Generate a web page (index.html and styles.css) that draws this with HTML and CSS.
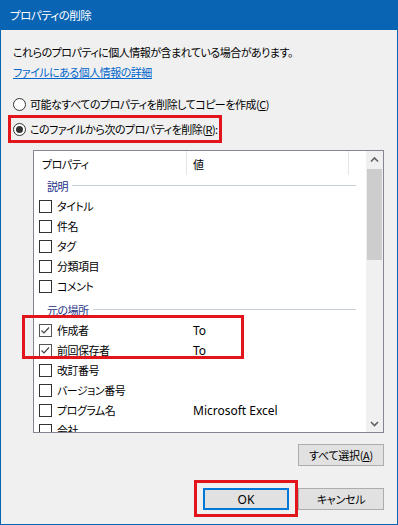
FILE: index.html
```html
<!DOCTYPE html>
<html lang="ja">
<head>
  <meta charset="UTF-8">
  <title>プロパティの削除</title>
  <link rel="stylesheet" href="styles.css">
</head>
<body>
  <div class="window">
    <div class="titlebar">プロパティの削除</div>
    <div class="content">
      <p class="note">これらのプロパティに個人情報が含まれている場合があります。</p>
      <a class="link" href="#">ファイルにある個人情報の詳細</a>

      <div class="radio-row"><span class="radio"></span><span class="label">可能なすべてのプロパティを削除してコピーを作成(<u>C</u>)</span></div>
      <div class="radio-row marked"><span class="radio on"></span><span class="label">このファイルから次のプロパティを削除(<u>R</u>):</span></div>

      <div class="listbox">
        <div class="list-main">
          <div class="list-head">
            <span class="head-name">プロパティ</span>
            <span class="head-val">値</span>
          </div>
          <div class="group"><span>説明</span></div>
          <div class="item"><span class="cell-name"><span class="check"></span>タイトル</span></div>
          <div class="item"><span class="cell-name"><span class="check"></span>件名</span></div>
          <div class="item"><span class="cell-name"><span class="check"></span>タグ</span></div>
          <div class="item"><span class="cell-name"><span class="check"></span>分類項目</span></div>
          <div class="item"><span class="cell-name"><span class="check"></span>コメント</span></div>
          <div class="group second"><span>元の場所</span></div>
          <div class="item"><span class="cell-name"><span class="check on"><svg width="13" height="13" viewBox="0 0 13 13"><polyline points="2.5,6.5 5,9 10,3.5" fill="none" stroke="#444" stroke-width="1.2"/></svg></span>作成者</span><span class="cell-val">To</span></div>
          <div class="item"><span class="cell-name"><span class="check on"><svg width="13" height="13" viewBox="0 0 13 13"><polyline points="2.5,6.5 5,9 10,3.5" fill="none" stroke="#444" stroke-width="1.2"/></svg></span>前回保存者</span><span class="cell-val">To</span></div>
          <div class="item"><span class="cell-name"><span class="check"></span>改訂番号</span></div>
          <div class="item"><span class="cell-name"><span class="check"></span>バージョン番号</span></div>
          <div class="item"><span class="cell-name"><span class="check"></span>プログラム名</span><span class="cell-val">Microsoft Excel</span></div>
          <div class="item"><span class="cell-name"><span class="check"></span>会社</span></div>
        </div>
        <div class="scrollbar">
          <span class="arrow"><svg width="17" height="17" viewBox="0 0 17 17"><polyline points="5,10.5 8.5,7 12,10.5" fill="none" stroke="#606060" stroke-width="1.6"/></svg></span>
          <span class="thumb"></span>
          <span class="track"></span>
          <span class="arrow"><svg width="17" height="17" viewBox="0 0 17 17"><polyline points="5,7 8.5,10.5 12,7" fill="none" stroke="#606060" stroke-width="1.6"/></svg></span>
        </div>
      </div>

      <div class="select-row"><button class="btn">すべて選択(<u>A</u>)</button></div>
      <div class="footer">
        <button class="btn default latin">OK</button>
        <button class="btn">キャンセル</button>
      </div>
    </div>

    <div class="mark mark-rows"></div>
    <div class="mark mark-ok"></div>
  </div>
</body>
</html>
```

FILE: styles.css
```css
body {
  margin: 0;
  background-color: #f0f0f0;
  font-family: "Noto Sans CJK JP", "Noto Sans", sans-serif;
  font-size: 11px;
  letter-spacing: -0.5px;
  font-feature-settings: "palt";
  color: #000;
}
.window {
  position: relative;
  width: 398px;
  height: 525px;
  box-sizing: border-box;
  border: 1px solid #0a64b4;
  border-top: none;
  background-color: #f0f0f0;
  overflow: hidden;
}
.titlebar {
  height: 30px;
  line-height: 30px;
  margin: 0 -1px;
  padding-left: 10px;
  background-color: #0a64b4;
  color: #fff;
  font-size: 11.5px;
}
.content {
  padding: 0 13px 0 12px;
}
.note {
  margin: 12px 0 0;
  line-height: 20px;
}
.link {
  display: block;
  line-height: 20px;
  color: #0066cc;
}
.radio-row {
  display: flex;
  align-items: center;
  height: 20px;
  margin-top: 12px;
  white-space: nowrap;
}
.radio {
  flex: none;
  width: 13px;
  height: 13px;
  box-sizing: border-box;
  border: 1px solid #333;
  border-radius: 50%;
  background-color: #fff;
  margin-right: 4px;
  display: flex;
  align-items: center;
  justify-content: center;
}
.radio.on::after {
  content: "";
  width: 7px;
  height: 7px;
  border-radius: 50%;
  background-color: #333;
}
.radio-row.marked {
  width: 214px;
  height: 28px;
  box-sizing: border-box;
  margin: 1px 0 0 -5px;
  padding-left: 2px;
  border: 3px solid #e2141c;
}
.listbox {
  display: flex;
  width: 351px;
  height: 283px;
  box-sizing: border-box;
  margin: 7px 0 0 20px;
  border: 1px solid #828790;
  background-color: #fff;
  overflow: hidden;
}
.list-main {
  flex: 1;
  overflow: hidden;
}
.list-head {
  display: flex;
  height: 24px;
  line-height: 26px;
}
.list-head span {
  height: 24px;
  box-sizing: border-box;
  border-right: 1px solid #e5e5e5;
}
.head-name {
  width: 153px;
  padding-left: 8px;
}
.head-val {
  width: 162px;
  padding-left: 6px;
}
.group {
  display: flex;
  align-items: center;
  height: 21px;
  padding: 0 10px 0 13px;
  color: #1e3287;
}
.group.second {
  margin-top: 3px;
}
.group::after {
  content: "";
  flex: 1;
  height: 1px;
  margin-left: 4px;
  background-color: #c8d0da;
}
.item {
  display: flex;
  align-items: center;
  height: 20px;
}
.cell-name {
  display: flex;
  align-items: center;
  width: 159px;
  padding-left: 5px;
  box-sizing: border-box;
}
.cell-val,
.latin {
  font-family: "Noto Sans", "Open Sans", sans-serif;
  font-size: 12px;
  letter-spacing: 0;
}
.check {
  width: 13px;
  height: 13px;
  box-sizing: border-box;
  border: 1px solid #333;
  margin-right: 5px;
  position: relative;
}
.check.on {
  border-color: #555;
}
.check svg {
  position: absolute;
  left: -1px;
  top: -1px;
}
.scrollbar {
  width: 17px;
  display: flex;
  flex-direction: column;
  background-color: #f0f0f0;
}
.arrow {
  height: 17px;
  display: block;
}
.arrow svg {
  display: block;
}
.thumb {
  height: 91px;
  margin: 1px 1px 0;
  background-color: #cdcdcd;
}
.track {
  flex: 1;
}
.select-row {
  display: flex;
  justify-content: flex-end;
  margin-top: 11px;
}
.footer {
  display: flex;
  justify-content: flex-end;
  gap: 9px;
  margin-top: 22px;
}
.btn {
  width: 86px;
  height: 22px;
  padding: 0;
  font-family: inherit;
  font-size: 11px;
  letter-spacing: -0.3px;
  font-feature-settings: "palt";
  background-color: #e1e1e1;
  border: 1px solid #adadad;
  color: #000;
}
.btn.latin {
  font-family: "Noto Sans", "Open Sans", sans-serif;
  font-size: 12px;
  letter-spacing: 0;
}
.btn.default {
  border-color: #0078d7;
  box-shadow: inset 0 0 0 1px #0078d7;
}
.mark {
  position: absolute;
  box-sizing: border-box;
  border: 3px solid #e2141c;
}
.mark-rows {
  left: 21px;
  top: 315px;
  width: 222px;
  height: 44px;
}
.mark-ok {
  left: 193px;
  top: 480px;
  width: 104px;
  height: 37px;
}
```
